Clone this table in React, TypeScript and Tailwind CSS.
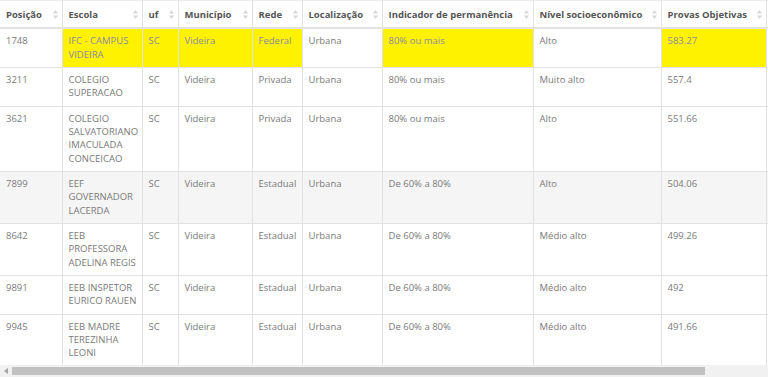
import React from 'react';

type Row = {
  pos: string;
  escola: string[];
  uf: string;
  municipio: string;
  rede: string;
  local: string;
  indicador: string;
  nivel: string;
  provas: string;
  highlight?: boolean;
  shaded?: boolean;
};

const rows: Row[] = [
  { pos: '1748', escola: ['IFC - CAMPUS', 'VIDEIRA'], uf: 'SC', municipio: 'Videira', rede: 'Federal', local: 'Urbana', indicador: '80% ou mais', nivel: 'Alto', provas: '583.27', highlight: true },
  { pos: '3211', escola: ['COLEGIO', 'SUPERACAO'], uf: 'SC', municipio: 'Videira', rede: 'Privada', local: 'Urbana', indicador: '80% ou mais', nivel: 'Muito alto', provas: '557.4' },
  { pos: '3621', escola: ['COLEGIO', 'SALVATORIANO', 'IMACULADA', 'CONCEICAO'], uf: 'SC', municipio: 'Videira', rede: 'Privada', local: 'Urbana', indicador: '80% ou mais', nivel: 'Alto', provas: '551.66' },
  { pos: '7899', escola: ['EEF', 'GOVERNADOR', 'LACERDA'], uf: 'SC', municipio: 'Videira', rede: 'Estadual', local: 'Urbana', indicador: 'De 60% a 80%', nivel: 'Alto', provas: '504.06', shaded: true },
  { pos: '8642', escola: ['EEB', 'PROFESSORA', 'ADELINA REGIS'], uf: 'SC', municipio: 'Videira', rede: 'Estadual', local: 'Urbana', indicador: 'De 60% a 80%', nivel: 'Médio alto', provas: '499.26' },
  { pos: '9891', escola: ['EEB INSPETOR', 'EURICO RAUEN'], uf: 'SC', municipio: 'Videira', rede: 'Estadual', local: 'Urbana', indicador: 'De 60% a 80%', nivel: 'Médio alto', provas: '492' },
  { pos: '9945', escola: ['EEB MADRE', 'TEREZINHA', 'LEONI'], uf: 'SC', municipio: 'Videira', rede: 'Estadual', local: 'Urbana', indicador: 'De 60% a 80%', nivel: 'Médio alto', provas: '491.66' },
];

// last column is off-screen, only its left edge shows
const headers = [
  { label: 'Posição', w: 'w-[62px]' },
  { label: 'Escola', w: 'w-[80px]' },
  { label: 'uf', w: 'w-[36px]' },
  { label: 'Município', w: 'w-[74px]' },
  { label: 'Rede', w: 'w-[50px]' },
  { label: 'Localização', w: 'w-[80px]' },
  { label: 'Indicador de permanência', w: 'w-[151px]' },
  { label: 'Nível socioeconômico', w: 'w-[128px]' },
  { label: 'Provas Objetivas', w: 'w-[105px]' },
  { label: '', w: 'w-[72px]' },
];

const SortIcon = () => (
  <svg width="5" height="9" viewBox="0 0 5 9" className="shrink-0">
    <path d="M2.5 0 L5 3.5 L0 3.5 Z" fill="#d6d6d6" />
    <path d="M2.5 9 L5 5.5 L0 5.5 Z" fill="#d6d6d6" />
  </svg>
);

const Cell = ({ children, yellow }: { children: React.ReactNode; yellow?: boolean }) => (
  <td
    className={`align-top border-r border-[#e2e2e2] px-[6px] pt-[5px] pb-[6px] ${
      yellow ? 'bg-[#fff200] text-[#8a8aa3]' : ''
    }`}
  >
    {children}
  </td>
);

export default function App() {
  return (
    <div
      className="w-[768px] h-[377px] flex flex-col bg-white overflow-hidden"
      style={{ fontFamily: '"Open Sans", "Liberation Sans", sans-serif' }}
    >
      <div className="flex-1 overflow-hidden">
        <table className="table-fixed border-collapse w-[838px] text-[9.5px] leading-[13.33px] text-[#7a7a7a]">
          <thead>
            <tr className="border-b-2 border-[#e2e2e2] border-t border-t-[#ececec]">
              {headers.map((h, i) => (
                <th key={i} className={`${h.w} border-r border-[#e2e2e2] pl-[6px] pr-[4px] pt-[7px] pb-[6px] text-left font-bold text-[#555]`}>
                  <div className="flex items-center justify-between gap-1 h-[13.33px]">
                    <span className="whitespace-nowrap">{h.label}</span>
                    {h.label && <SortIcon />}
                  </div>
                </th>
              ))}
            </tr>
          </thead>
          <tbody>
            {rows.map((r) => (
              <tr key={r.pos} className={`border-b border-[#e2e2e2] ${r.shaded ? 'bg-[#f5f5f5]' : ''}`}>
                <Cell>{r.pos}</Cell>
                <Cell yellow={r.highlight}>
                  {r.escola.map((l) => (
                    <div key={l} className="whitespace-nowrap">{l}</div>
                  ))}
                </Cell>
                <Cell yellow={r.highlight}>{r.uf}</Cell>
                <Cell yellow={r.highlight}>{r.municipio}</Cell>
                <Cell yellow={r.highlight}>{r.rede}</Cell>
                <Cell>{r.local}</Cell>
                <Cell yellow={r.highlight}>{r.indicador}</Cell>
                <Cell>{r.nivel}</Cell>
                <Cell yellow={r.highlight}>{r.provas}</Cell>
                <Cell>{''}</Cell>
              </tr>
            ))}
          </tbody>
        </table>
      </div>
      <div className="h-[12px] shrink-0 bg-[#f1f1f1] flex items-center">
        <div className="w-[12px] flex justify-center">
          <svg width="4" height="6" viewBox="0 0 4 6">
            <path d="M0 3 L4 0 L4 6 Z" fill="#a3a3a3" />
          </svg>
        </div>
        <div className="w-[693px] h-[8px] bg-[#c1c1c1]" />
      </div>
    </div>
  );
}
